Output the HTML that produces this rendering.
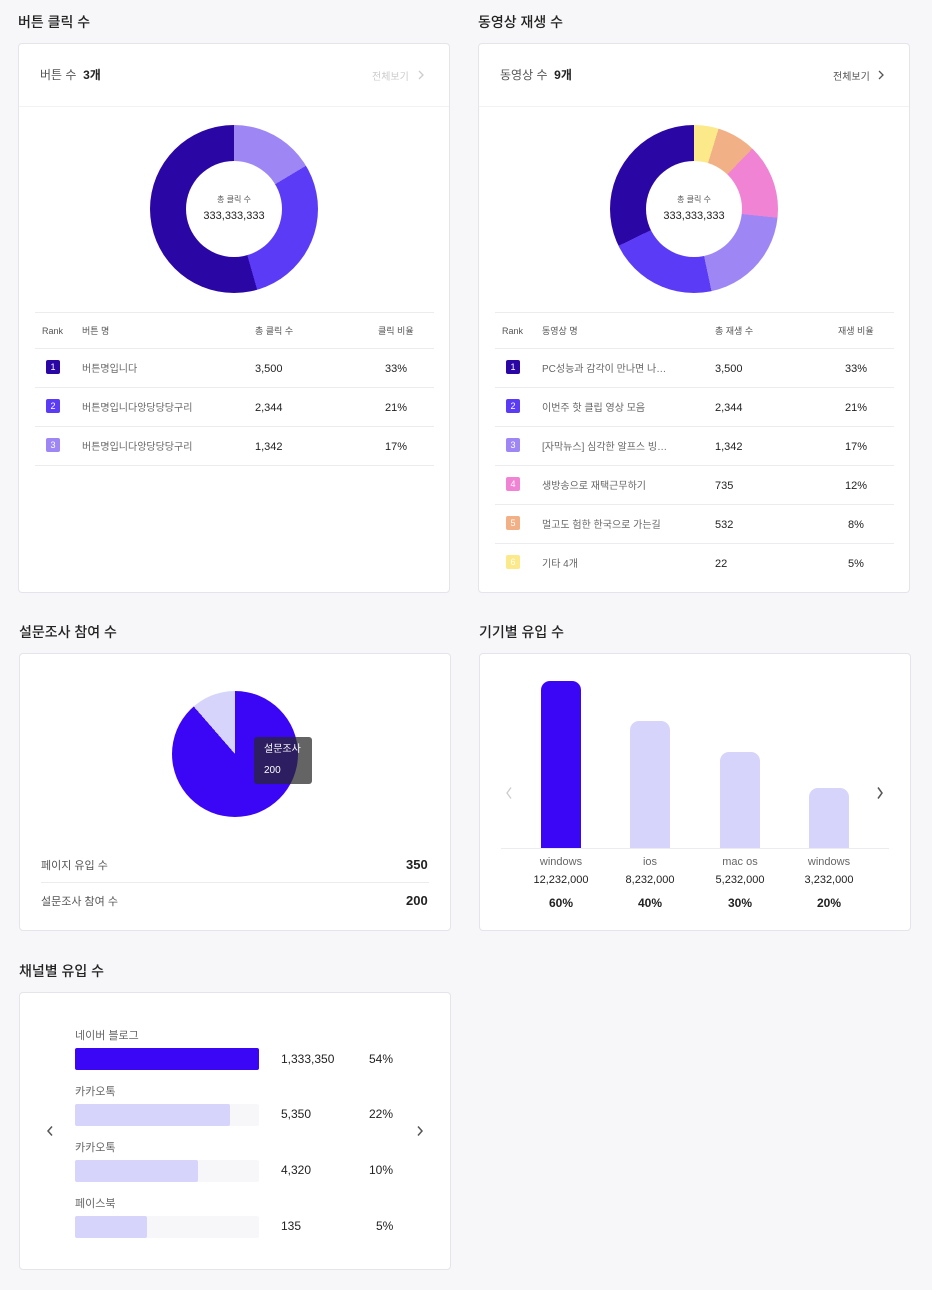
<!DOCTYPE html>
<html><head><meta charset="utf-8"><style>
*{margin:0;padding:0;box-sizing:border-box}
body{width:932px;height:1290px;background:#f7f7f9;font-family:"Liberation Sans","Noto Sans CJK KR",sans-serif;position:relative;overflow:hidden;color:#222}
.a{position:absolute;white-space:nowrap}
.st{font-size:14px;font-weight:500;color:#222}
.card{position:absolute;background:#fff;border:1px solid #e4e4ea;border-radius:4px}
.hl{position:absolute;height:1px;background:#ececf0}
.sm{font-size:9px;color:#555;line-height:12px}
.row{position:absolute;height:39px;line-height:39px;width:400px}
.row>*{position:absolute;top:2px;white-space:nowrap}
.nm{font-size:10px;color:#666}
.num{font-size:11px;color:#222}
.rk{top:12px!important;width:14px;height:14px;border-radius:2px;color:#fff;font-size:9px;text-align:center;line-height:14px}
.donut{position:absolute;width:168px;height:168px;border-radius:50%}
.hole{position:absolute;left:36px;top:36px;width:96px;height:96px;border-radius:50%;background:#fff;text-align:center}
svg.ch{position:absolute}
</style></head><body>

<div class="a st" style="left:18px;top:12px">버튼 클릭 수</div>
<div class="a st" style="left:478px;top:12px">동영상 재생 수</div>
<div class="a st" style="left:19px;top:622px">설문조사 참여 수</div>
<div class="a st" style="left:479px;top:622px">기기별 유입 수</div>
<div class="a st" style="left:19px;top:961px">채널별 유입 수</div>

<!-- Card 1 -->
<div class="card" style="left:18px;top:43px;width:432px;height:550px"></div>
<div class="a" style="left:40px;top:66px;font-size:12px;color:#555">버튼 수 &nbsp;<b style="color:#222">3개</b></div>
<div class="a" style="left:372px;top:68px;font-size:10px;color:#ccc">전체보기</div>
<svg class="ch" style="left:417px;top:70px" width="8" height="10"><polyline points="2,1 6,5 2,9" fill="none" stroke="#ccc" stroke-width="1.3"/></svg>
<div class="hl" style="left:19px;top:106px;width:430px;background:#f2f2f4"></div>
<div class="donut" style="left:150px;top:125px;background:conic-gradient(#9e87f5 0 59deg,#5b3bf5 59deg 164deg,#2a06a5 164deg 360deg)"><div class="hole"><div style="font-size:8px;color:#555;margin-top:34px;line-height:10px">총 클릭 수</div><div style="font-size:11px;margin-top:5px;line-height:13px">333,333,333</div></div></div>
<div class="hl" style="left:35px;top:312px;width:399px"></div>
<div class="a sm" style="left:42px;top:325px">Rank</div><div class="a sm" style="left:82px;top:325px">버튼 명</div><div class="a sm" style="left:255px;top:325px">총 클릭 수</div><div class="a sm" style="left:378px;top:325px">클릭 비율</div>
<div class="hl" style="left:35px;top:348px;width:399px"></div>
<div class="hl" style="left:35px;top:387px;width:399px"></div>
<div class="hl" style="left:35px;top:426px;width:399px"></div>
<div class="hl" style="left:35px;top:465px;width:399px"></div>
<div class="row" style="left:0;top:348px"><div class="rk" style="left:46px;background:#2a06a5">1</div><div class="nm" style="left:82px">버튼명입니다</div><div class="num" style="left:255px">3,500</div><div class="num" style="left:385px">33%</div></div>
<div class="row" style="left:0;top:387px"><div class="rk" style="left:46px;background:#5b3bf5">2</div><div class="nm" style="left:82px">버튼명입니다앙당당당구리</div><div class="num" style="left:255px">2,344</div><div class="num" style="left:385px">21%</div></div>
<div class="row" style="left:0;top:426px"><div class="rk" style="left:46px;background:#9e87f5">3</div><div class="nm" style="left:82px">버튼명입니다앙당당당구리</div><div class="num" style="left:255px">1,342</div><div class="num" style="left:385px">17%</div></div>

<!-- Card 2 -->
<div class="card" style="left:478px;top:43px;width:432px;height:550px"></div>
<div class="a" style="left:500px;top:66px;font-size:12px;color:#555">동영상 수 &nbsp;<b style="color:#222">9개</b></div>
<div class="a" style="left:833px;top:68px;font-size:10px;color:#555">전체보기</div>
<svg class="ch" style="left:877px;top:70px" width="8" height="10"><polyline points="2,1 6,5 2,9" fill="none" stroke="#555" stroke-width="1.3"/></svg>
<div class="hl" style="left:479px;top:106px;width:430px;background:#f2f2f4"></div>
<div class="donut" style="left:610px;top:125px;background:conic-gradient(#fbe98a 0 17deg,#f2b086 17deg 44deg,#f083d3 44deg 96deg,#9e87f5 96deg 168deg,#5b3bf5 168deg 244deg,#2a06a5 244deg 360deg)"><div class="hole"><div style="font-size:8px;color:#555;margin-top:34px;line-height:10px">총 클릭 수</div><div style="font-size:11px;margin-top:5px;line-height:13px">333,333,333</div></div></div>
<div class="hl" style="left:495px;top:312px;width:399px"></div>
<div class="a sm" style="left:502px;top:325px">Rank</div><div class="a sm" style="left:542px;top:325px">동영상 명</div><div class="a sm" style="left:715px;top:325px">총 재생 수</div><div class="a sm" style="left:838px;top:325px">재생 비율</div>
<div class="hl" style="left:495px;top:348px;width:399px"></div>
<div class="hl" style="left:495px;top:387px;width:399px"></div>
<div class="hl" style="left:495px;top:426px;width:399px"></div>
<div class="hl" style="left:495px;top:465px;width:399px"></div>
<div class="hl" style="left:495px;top:504px;width:399px"></div>
<div class="hl" style="left:495px;top:543px;width:399px"></div>
<div class="row" style="left:460px;top:348px"><div class="rk" style="left:46px;background:#2a06a5">1</div><div class="nm" style="left:82px">PC성능과 감각이 만나면 나…</div><div class="num" style="left:255px">3,500</div><div class="num" style="left:385px">33%</div></div>
<div class="row" style="left:460px;top:387px"><div class="rk" style="left:46px;background:#5b3bf5">2</div><div class="nm" style="left:82px">이번주 핫 클립 영상 모음</div><div class="num" style="left:255px">2,344</div><div class="num" style="left:385px">21%</div></div>
<div class="row" style="left:460px;top:426px"><div class="rk" style="left:46px;background:#9e87f5">3</div><div class="nm" style="left:82px">[자막뉴스] 심각한 알프스 빙…</div><div class="num" style="left:255px">1,342</div><div class="num" style="left:385px">17%</div></div>
<div class="row" style="left:460px;top:465px"><div class="rk" style="left:46px;background:#f083d3">4</div><div class="nm" style="left:82px">생방송으로 재택근무하기</div><div class="num" style="left:255px">735</div><div class="num" style="left:385px">12%</div></div>
<div class="row" style="left:460px;top:504px"><div class="rk" style="left:46px;background:#f2b086">5</div><div class="nm" style="left:82px">멀고도 험한 한국으로 가는길</div><div class="num" style="left:255px">532</div><div class="num" style="left:388px">8%</div></div>
<div class="row" style="left:460px;top:543px"><div class="rk" style="left:46px;background:#fbe98a">6</div><div class="nm" style="left:82px">기타 4개</div><div class="num" style="left:255px">22</div><div class="num" style="left:388px">5%</div></div>

<!-- Card 3 -->
<div class="card" style="left:19px;top:653px;width:432px;height:278px"></div>
<div class="a" style="left:172px;top:691px;width:126px;height:126px;border-radius:50%;background:conic-gradient(#3a06f5 0 319deg,#d6d4fb 319deg 360deg)"></div>
<div class="a" style="left:254px;top:737px;width:58px;height:47px;border-radius:3px;background:rgba(40,40,40,.72);color:#fff;font-size:10px;padding:2px 0 0 10px;line-height:21px">설문조사<br>200</div>
<div class="a" style="left:41px;top:857px;font-size:11px;color:#555">페이지 유입 수</div><div class="a" style="left:406px;top:857px;font-size:13px;font-weight:bold">350</div>
<div class="hl" style="left:41px;top:882px;width:388px"></div>
<div class="a" style="left:41px;top:893px;font-size:11px;color:#555">설문조사 참여 수</div><div class="a" style="left:406px;top:893px;font-size:13px;font-weight:bold">200</div>

<!-- Card 4 -->
<div class="card" style="left:479px;top:653px;width:432px;height:278px"></div>
<div class="a" style="left:541px;top:681px;width:40px;height:168px;border-radius:9px 9px 0 0;background:#3a06f5"></div>
<div class="a" style="left:630px;top:721px;width:40px;height:128px;border-radius:9px 9px 0 0;background:#d6d4fb"></div>
<div class="a" style="left:720px;top:752px;width:40px;height:97px;border-radius:9px 9px 0 0;background:#d6d4fb"></div>
<div class="a" style="left:809px;top:788px;width:40px;height:61px;border-radius:9px 9px 0 0;background:#d6d4fb"></div>
<div class="hl" style="left:501px;top:848px;width:388px"></div>
<svg class="ch" style="left:505px;top:786px" width="8" height="14"><polyline points="6,1.5 2,7 6,12.5" fill="none" stroke="#ccc" stroke-width="1.3"/></svg>
<svg class="ch" style="left:876px;top:786px" width="8" height="14"><polyline points="2,1.5 6,7 2,12.5" fill="none" stroke="#555" stroke-width="1.5"/></svg>
<div class="a" style="left:521px;top:856px;width:80px;text-align:center;font-size:11px;color:#666">windows</div>
<div class="a" style="left:610px;top:856px;width:80px;text-align:center;font-size:11px;color:#666">ios</div>
<div class="a" style="left:700px;top:856px;width:80px;text-align:center;font-size:11px;color:#666">mac os</div>
<div class="a" style="left:789px;top:856px;width:80px;text-align:center;font-size:11px;color:#666">windows</div>
<div class="a" style="left:521px;top:874px;width:80px;text-align:center;font-size:11px">12,232,000</div>
<div class="a" style="left:610px;top:874px;width:80px;text-align:center;font-size:11px">8,232,000</div>
<div class="a" style="left:700px;top:874px;width:80px;text-align:center;font-size:11px">5,232,000</div>
<div class="a" style="left:789px;top:874px;width:80px;text-align:center;font-size:11px">3,232,000</div>
<div class="a" style="left:521px;top:896px;width:80px;text-align:center;font-size:12px;font-weight:bold">60%</div>
<div class="a" style="left:610px;top:896px;width:80px;text-align:center;font-size:12px;font-weight:bold">40%</div>
<div class="a" style="left:700px;top:896px;width:80px;text-align:center;font-size:12px;font-weight:bold">30%</div>
<div class="a" style="left:789px;top:896px;width:80px;text-align:center;font-size:12px;font-weight:bold">20%</div>

<!-- Card 5 -->
<div class="card" style="left:19px;top:992px;width:432px;height:278px"></div>
<svg class="ch" style="left:46px;top:1125px" width="8" height="12"><polyline points="6,1.5 2,6 6,10.5" fill="none" stroke="#555" stroke-width="1.5"/></svg>
<svg class="ch" style="left:416px;top:1125px" width="8" height="12"><polyline points="2,1.5 6,6 2,10.5" fill="none" stroke="#555" stroke-width="1.5"/></svg>
<div class="a" style="left:75px;top:1027px;font-size:11px;color:#666">네이버 블로그</div>
<div class="a" style="left:75px;top:1048px;width:184px;height:22px;border-radius:2px;background:#3a06f5"></div>
<div class="a" style="left:281px;top:1052px;font-size:12px">1,333,350</div><div class="a" style="left:369px;top:1052px;font-size:12px">54%</div>
<div class="a" style="left:75px;top:1083px;font-size:11px;color:#666">카카오톡</div>
<div class="a" style="left:75px;top:1104px;width:184px;height:22px;border-radius:2px;background:#f7f7f9"><div style="width:155px;height:22px;border-radius:2px;background:#d6d4fb"></div></div>
<div class="a" style="left:281px;top:1107px;font-size:12px">5,350</div><div class="a" style="left:369px;top:1107px;font-size:12px">22%</div>
<div class="a" style="left:75px;top:1139px;font-size:11px;color:#666">카카오톡</div>
<div class="a" style="left:75px;top:1160px;width:184px;height:22px;border-radius:2px;background:#f7f7f9"><div style="width:123px;height:22px;border-radius:2px;background:#d6d4fb"></div></div>
<div class="a" style="left:281px;top:1163px;font-size:12px">4,320</div><div class="a" style="left:369px;top:1163px;font-size:12px">10%</div>
<div class="a" style="left:75px;top:1195px;font-size:11px;color:#666">페이스북</div>
<div class="a" style="left:75px;top:1216px;width:184px;height:22px;border-radius:2px;background:#f7f7f9"><div style="width:72px;height:22px;border-radius:2px;background:#d6d4fb"></div></div>
<div class="a" style="left:281px;top:1219px;font-size:12px">135</div><div class="a" style="left:376px;top:1219px;font-size:12px">5%</div>

</body></html>
